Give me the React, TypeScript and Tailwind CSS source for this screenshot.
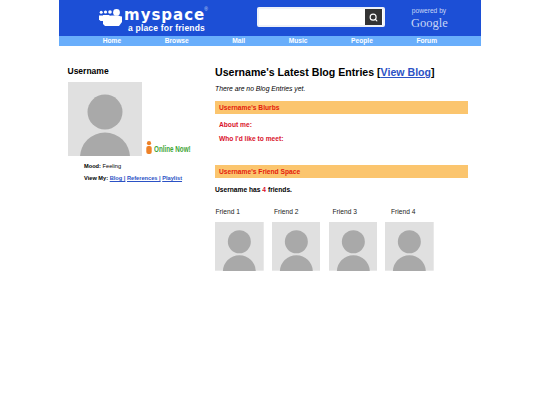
import { Search } from 'lucide-react';

const NAV_ITEMS = ['Home', 'Browse', 'Mail', 'Music', 'People', 'Forum'];
const FRIENDS = ['Friend 1', 'Friend 2', 'Friend 3', 'Friend 4'];

function Avatar({ className }: { className: string }) {
  return (
    <svg viewBox="0 0 74 74" className={className}>
      <rect width="74" height="74" fill="#e0e0e0" />
      <circle cx="37" cy="30" r="17.5" fill="#a9a9a9" />
      <circle cx="37" cy="75.5" r="25" fill="#a9a9a9" />
    </svg>
  );
}

function PeopleLogo() {
  return (
    <svg viewBox="0 0 23 17" className="w-[23px] h-[17px]">
      <g fill="#fff">
        <circle cx="2.200" cy="3.200" r="1.500" />
        <circle cx="6.500" cy="3" r="1.600" />
        <circle cx="11" cy="3" r="1.800" />
        <circle cx="17.500" cy="3.400" r="3.400" />
        <path d="M0 6.500h5v5.500H1.500L0 10.500z" />
        <path d="M4 6h6.500v11H6l-2-2z" />
        <path d="M8 7.500c2-1.500 12-1.500 15 0v5.500l-3 4H8z" />
      </g>
    </svg>
  );
}

function SectionBar({ title }: { title: string }) {
  return (
    <div className="h-[13px] bg-[#fbc56e] pl-[4px] text-[6.67px] leading-[13px] font-bold text-[#e41c0c]">{title}</div>
  );
}

export default function App() {
  return (
    <div className="w-[540px] h-[405px] bg-white font-['Liberation_Sans',Arial,sans-serif] text-black overflow-hidden">
      {/* Header */}
      <header className="w-[422px] ml-[59px]">
        <div className="h-[36px] bg-[#1c4fd6] flex">
          <div className="w-[198px] pl-[40px] pt-[9px] flex">
            <PeopleLogo />
            <div className="ml-[2px] text-white">
              <div className="font-['DejaVu_Sans',sans-serif] text-[15px] leading-[14px] font-bold tracking-[1px] -mt-[1px] whitespace-nowrap">
                myspace
              </div>
              <div className="text-[8.5px] leading-[10px] font-bold ml-[4px] mt-[1px] tracking-[0.2px] whitespace-nowrap">a place for friends</div>
            </div>
            <span className="text-[5px] leading-[5px] text-[#c8d6f5] -mt-[2px] -ml-[1px]">®</span>
          </div>
          <div className="w-[128px] h-[20px] mt-[7px] bg-white rounded-[2px] border-2 border-[#eef1f8] flex justify-end">
            <div className="w-[17px] h-[16px] mr-[1px] bg-[#333] flex items-center justify-center">
              <Search className="w-[9px] h-[9px] text-white" strokeWidth={3} />
            </div>
          </div>
          <div className="ml-[26px] pt-[7px] w-[36px] text-center text-[#c8d6f5]">
            <div className="text-[6.67px] leading-[7px] whitespace-nowrap">powered by</div>
            <div className="font-['Liberation_Serif',serif] text-[12.5px] leading-[14px] mt-[1.5px]">Google</div>
          </div>
        </div>
        <nav className="h-[10px] bg-[#69aefb] flex gap-[43.5px] pl-[43.7px]">
          {NAV_ITEMS.map((item) => (
            <div key={item} className="text-[6.67px] leading-[10px] font-bold text-white">
              {item}
            </div>
          ))}
        </nav>
      </header>

      <main className="flex mt-[19px] ml-[67.5px]">
        {/* Left column */}
        <section className="w-[147.5px]">
          <h2 className="text-[8.5px] leading-[11px] font-bold pt-[0.5px] -mb-[0.5px]">Username</h2>
          <div className="flex items-end mt-[6px]">
            <Avatar className="w-[74px] h-[74px]" />
            <div className="flex items-end ml-[4.5px] mb-[2px]">
              <svg viewBox="0 0 6 13" className="w-[6px] h-[13px]">
                <circle cx="3" cy="2.200" r="2.100" fill="#ee8127" />
                <rect x="0.300" y="5" width="5.400" height="8" rx="2" fill="#ee8127" />
              </svg>
              <span className="ml-[2px] text-[8.5px] leading-[9px] font-bold text-[#3ea535] scale-x-[0.74] origin-left whitespace-nowrap">
                Online Now!
              </span>
            </div>
          </div>
          <div className="ml-[16.5px] mt-[7px] text-[5.67px] leading-[7px]">
            <b>Mood:</b> Feeling
          </div>
          <div className="ml-[16.5px] mt-[5px] text-[5.67px] leading-[7px] font-bold whitespace-nowrap">
            View My: <span className="text-[#2b52c5] underline">Blog |</span>{' '}
            <span className="text-[#2b52c5] underline">References |</span>{' '}
            <span className="text-[#2b52c5] underline">Playlist</span>
          </div>
        </section>

        {/* Right column */}
        <section className="w-[253px] -mt-[1px]">
          <h1 className="text-[10.6px] leading-[14px] font-bold whitespace-nowrap mt-[1px]">
            Username's Latest Blog Entries [<span className="text-[#2b52c5] underline">View Blog</span>]
          </h1>
          <p className="mt-[6px] text-[6.8px] leading-[8px] italic">There are no Blog Entries yet.</p>
          <div className="mt-[8px]">
            <SectionBar title="Username's Blurbs" />
          </div>
          <div className="ml-[4px] mt-[7px] text-[6.67px] leading-[8px] font-bold text-[#d9112c]">About me:</div>
          <div className="ml-[4px] mt-[6px] text-[6.67px] leading-[8px] font-bold text-[#d9112c]">Who I'd like to meet:</div>
          <div className="mt-[22px]">
            <SectionBar title="Username's Friend Space" />
          </div>
          <p className="mt-[8px] text-[6.67px] leading-[8px] font-bold">
            Username has <span className="text-[#d9112c]">4</span> friends.
          </p>
          <div className="flex mt-[14px] ml-[0.5px]">
            {FRIENDS.map((friend) => (
              <div key={friend} className="w-[58.5px] text-[6.67px] leading-[8px] text-[#222]">
                {friend}
              </div>
            ))}
          </div>
          <div className="flex gap-[8.1px] mt-[6px]">
            {FRIENDS.map((friend) => (
              <Avatar key={friend} className="w-[48.7px] h-[48.7px]" />
            ))}
          </div>
        </section>
      </main>
    </div>
  );
}
